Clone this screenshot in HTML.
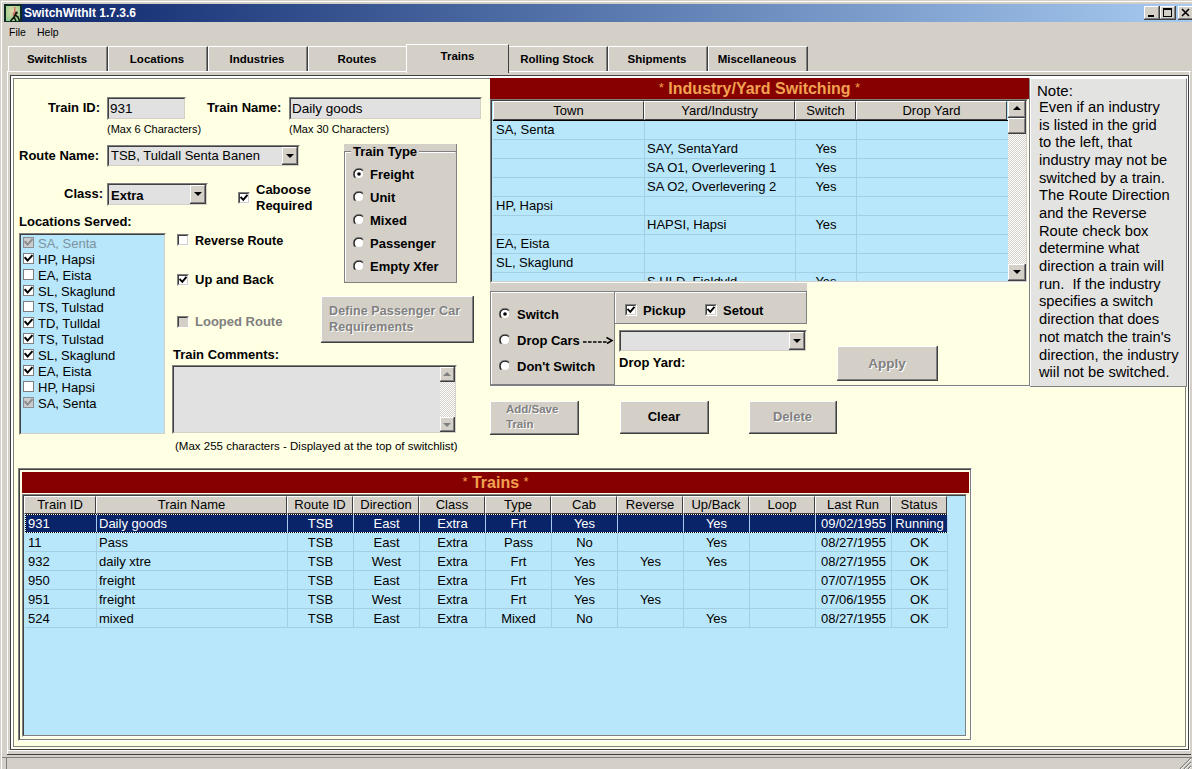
<!DOCTYPE html><html><head><meta charset="utf-8"><style>
html,body{margin:0;padding:0;}
body{width:1192px;height:769px;overflow:hidden;position:relative;background:#D4D0C8;font-family:'Liberation Sans', sans-serif;}
div{box-sizing:content-box;}
</style></head><body>
<div style="position:absolute;left:1px;top:1px;width:1191px;height:1px;background:#fff"></div>
<div style="position:absolute;left:1px;top:1px;width:1px;height:768px;background:#fff"></div>
<div style="position:absolute;left:4px;top:4px;width:1188px;height:18px;background:linear-gradient(to right,#0A246A,#A6CAF0)"></div>
<svg style="position:absolute;left:4px;top:4px" width="18" height="18"><rect x="0" y="0" width="18" height="18" fill="#0E2A22"/><defs><radialGradient id="ig" cx="0.5" cy="0.35" r="0.7"><stop offset="0" stop-color="#E8D8A8"/><stop offset="1" stop-color="#8FD08F"/></radialGradient></defs><rect x="2" y="2" width="14" height="15" fill="url(#ig)"/><path d="M10 3 L11.5 3 L11.5 8 L13 9 L12 12 L9 12 L8.5 9 L10 8 Z" fill="#D07868"/><circle cx="12.5" cy="8.8" r="1.3" fill="#1A1A10"/><path d="M12 9.5 L10 13 L6.5 17 M10 13 L12 17 M11 11 L14 13 L15.5 17" stroke="#101808" stroke-width="1.6" fill="none"/></svg>
<div style="position:absolute;left:24px;top:5px;white-space:pre;font:bold 12px/16px 'Liberation Sans', sans-serif;color:#fff">SwitchWithIt 1.7.3.6</div>
<div style="position:absolute;left:1144px;top:6px;width:15px;height:13px;border-right:1px solid #404040;border-bottom:1px solid #404040;"><div style="position:absolute;left:0;top:0;width:13px;height:11px;border:1px solid;border-color:#FFFFFF #808080 #808080 #FFFFFF;background:#D4D0C8"></div></div>
<div style="position:absolute;left:1160px;top:6px;width:15px;height:13px;border-right:1px solid #404040;border-bottom:1px solid #404040;"><div style="position:absolute;left:0;top:0;width:13px;height:11px;border:1px solid;border-color:#FFFFFF #808080 #808080 #FFFFFF;background:#D4D0C8"></div></div>
<div style="position:absolute;left:1178px;top:6px;width:15px;height:13px;border-right:1px solid #404040;border-bottom:1px solid #404040;"><div style="position:absolute;left:0;top:0;width:13px;height:11px;border:1px solid;border-color:#FFFFFF #808080 #808080 #FFFFFF;background:#D4D0C8"></div></div>
<div style="position:absolute;left:1148px;top:15px;width:6px;height:2px;background:#000"></div>
<div style="position:absolute;left:1163px;top:8px;width:9px;height:9px;border:1px solid #000;border-top-width:2px;box-sizing:border-box"></div>
<div style="position:absolute;left:1181px;top:5px;white-space:pre;line-height:10px;top:8px"><svg width="10" height="10"><path d="M1 1 L8 8 M8 1 L1 8" stroke="#000" stroke-width="1.6"/></svg></div>
<div style="position:absolute;left:9px;top:26px;white-space:pre;font:10.5px/12px 'Liberation Sans', sans-serif;color:#000">File</div>
<div style="position:absolute;left:37px;top:26px;white-space:pre;font:10.5px/12px 'Liberation Sans', sans-serif;color:#000">Help</div>
<div style="position:absolute;left:8px;top:46px;width:98px;height:25px;border-left:1px solid #fff;border-top:1px solid #fff;border-right:1px solid #404040;background:#D4D0C8;box-sizing:border-box;width:100px;"></div>
<div style="position:absolute;left:106px;top:47px;width:1px;height:24px;background:#808080"></div>
<div style="position:absolute;left:7px;top:53px;width:100px;text-align:center;white-space:pre;font:bold 11.5px/13px 'Liberation Sans', sans-serif;color:#000">Switchlists</div>
<div style="position:absolute;left:108px;top:46px;width:98px;height:25px;border-left:1px solid #fff;border-top:1px solid #fff;border-right:1px solid #404040;background:#D4D0C8;box-sizing:border-box;width:100px;"></div>
<div style="position:absolute;left:206px;top:47px;width:1px;height:24px;background:#808080"></div>
<div style="position:absolute;left:107px;top:53px;width:100px;text-align:center;white-space:pre;font:bold 11.5px/13px 'Liberation Sans', sans-serif;color:#000">Locations</div>
<div style="position:absolute;left:208px;top:46px;width:98px;height:25px;border-left:1px solid #fff;border-top:1px solid #fff;border-right:1px solid #404040;background:#D4D0C8;box-sizing:border-box;width:100px;"></div>
<div style="position:absolute;left:306px;top:47px;width:1px;height:24px;background:#808080"></div>
<div style="position:absolute;left:207px;top:53px;width:100px;text-align:center;white-space:pre;font:bold 11.5px/13px 'Liberation Sans', sans-serif;color:#000">Industries</div>
<div style="position:absolute;left:308px;top:46px;width:98px;height:25px;border-left:1px solid #fff;border-top:1px solid #fff;border-right:1px solid #404040;background:#D4D0C8;box-sizing:border-box;width:100px;"></div>
<div style="position:absolute;left:406px;top:47px;width:1px;height:24px;background:#808080"></div>
<div style="position:absolute;left:307px;top:53px;width:100px;text-align:center;white-space:pre;font:bold 11.5px/13px 'Liberation Sans', sans-serif;color:#000">Routes</div>
<div style="position:absolute;left:508px;top:46px;width:98px;height:25px;border-left:1px solid #fff;border-top:1px solid #fff;border-right:1px solid #404040;background:#D4D0C8;box-sizing:border-box;width:100px;"></div>
<div style="position:absolute;left:606px;top:47px;width:1px;height:24px;background:#808080"></div>
<div style="position:absolute;left:507px;top:53px;width:100px;text-align:center;white-space:pre;font:bold 11.5px/13px 'Liberation Sans', sans-serif;color:#000">Rolling Stock</div>
<div style="position:absolute;left:608px;top:46px;width:98px;height:25px;border-left:1px solid #fff;border-top:1px solid #fff;border-right:1px solid #404040;background:#D4D0C8;box-sizing:border-box;width:100px;"></div>
<div style="position:absolute;left:706px;top:47px;width:1px;height:24px;background:#808080"></div>
<div style="position:absolute;left:607px;top:53px;width:100px;text-align:center;white-space:pre;font:bold 11.5px/13px 'Liberation Sans', sans-serif;color:#000">Shipments</div>
<div style="position:absolute;left:708px;top:46px;width:98px;height:25px;border-left:1px solid #fff;border-top:1px solid #fff;border-right:1px solid #404040;background:#D4D0C8;box-sizing:border-box;width:100px;"></div>
<div style="position:absolute;left:806px;top:47px;width:1px;height:24px;background:#808080"></div>
<div style="position:absolute;left:707px;top:53px;width:100px;text-align:center;white-space:pre;font:bold 11.5px/13px 'Liberation Sans', sans-serif;color:#000">Miscellaneous</div>
<div style="position:absolute;left:406px;top:44px;width:103px;height:29px;border-left:1px solid #fff;border-top:1px solid #fff;border-right:1px solid #404040;background:#D4D0C8;box-sizing:border-box;z-index:2"></div>
<div style="position:absolute;left:406px;top:50px;width:103px;text-align:center;white-space:pre;font:bold 11.5px/13px 'Liberation Sans', sans-serif;color:#000;z-index:3">Trains</div>
<div style="position:absolute;left:7px;top:71px;width:1184px;height:1px;background:#fff"></div>
<div style="position:absolute;left:7px;top:71px;width:1px;height:683px;background:#fff"></div>
<div style="position:absolute;left:7px;top:754px;width:1184px;height:1px;background:#404040"></div>
<div style="position:absolute;left:10px;top:75px;width:1179px;height:675px;background:#FFFFE3;border:1px solid #404040;box-sizing:border-box"></div>
<div style="position:absolute;left:11px;top:76px;width:1177px;height:673px;border:1px solid #fff;box-sizing:border-box"></div>
<div style="position:absolute;left:12px;top:77px;width:1175px;height:671px;border-left:1px solid #fff;border-top:1px solid #fff;box-sizing:border-box"></div>
<div style="position:absolute;left:13px;top:78px;width:1173px;height:669px;border:1px solid #808080;box-sizing:border-box"></div>
<div style="position:absolute;left:1189px;top:72px;width:1px;height:679px;background:#fff"></div>
<div style="position:absolute;left:8px;top:750px;width:1182px;height:1px;background:#fff"></div>
<div style="position:absolute;left:2px;top:757px;width:1190px;height:1px;background:#808080"></div>
<div style="position:absolute;left:2px;top:758px;width:1190px;height:11px;background:#D4D0C8"></div>
<div style="position:absolute;left:6px;top:757px;width:1px;height:12px;background:#808080"></div>
<svg style="position:absolute;left:1178px;top:756px" width="14" height="13"><path d="M13 2 L2 13 M13 6 L6 13 M13 10 L10 13" stroke="#808080" stroke-width="1.2"/><path d="M13 3 L3 13 M13 7 L7 13 M13 11 L11 13" stroke="#fff" stroke-width="0.8"/></svg>
<div style="position:absolute;left:48px;top:100px;white-space:pre;font:bold 13px/16px 'Liberation Sans', sans-serif;color:#000">Train ID:</div>
<div style="position:absolute;left:107px;top:97px;width:77px;height:21px;border:1px solid;border-color:#808080 transparent transparent #808080;"><div style="position:absolute;left:0;top:0;width:75px;height:19px;border:1px solid;border-color:#404040 #D4D0C8 #D4D0C8 #404040;background:#E1E1E1"></div></div>
<div style="position:absolute;left:110px;top:101px;white-space:pre;font:13.5px/16px 'Liberation Sans', sans-serif;color:#000">931</div>
<div style="position:absolute;left:107px;top:123px;white-space:pre;font:11px/13px 'Liberation Sans', sans-serif;color:#000">(Max 6 Characters)</div>
<div style="position:absolute;left:207px;top:100px;white-space:pre;font:bold 13px/16px 'Liberation Sans', sans-serif;color:#000">Train Name:</div>
<div style="position:absolute;left:289px;top:97px;width:191px;height:21px;border:1px solid;border-color:#808080 transparent transparent #808080;"><div style="position:absolute;left:0;top:0;width:189px;height:19px;border:1px solid;border-color:#404040 #D4D0C8 #D4D0C8 #404040;background:#E1E1E1"></div></div>
<div style="position:absolute;left:292px;top:101px;white-space:pre;font:13.5px/16px 'Liberation Sans', sans-serif;color:#000">Daily goods</div>
<div style="position:absolute;left:289px;top:123px;white-space:pre;font:11px/13px 'Liberation Sans', sans-serif;color:#000">(Max 30 Characters)</div>
<div style="position:absolute;left:19px;top:148px;white-space:pre;font:bold 13px/16px 'Liberation Sans', sans-serif;color:#000">Route Name:</div>
<div style="position:absolute;left:107px;top:145px;width:191px;height:20px;border:1px solid;border-color:#808080 transparent transparent #808080;"><div style="position:absolute;left:0;top:0;width:189px;height:18px;border:1px solid;border-color:#404040 #D4D0C8 #D4D0C8 #404040;background:#E1E1E1"></div></div>
<div style="position:absolute;left:282px;top:147px;width:15px;height:17px;border-right:1px solid #404040;border-bottom:1px solid #404040;"><div style="position:absolute;left:0;top:0;width:13px;height:15px;border:1px solid;border-color:#FFFFFF #808080 #808080 #FFFFFF;background:#D4D0C8"></div></div>
<div style="position:absolute;left:286px;top:154px;width:0;height:0;border-left:4px solid transparent;border-right:4px solid transparent;border-top:4px solid #000"></div>
<div style="position:absolute;left:111px;top:148px;white-space:pre;font:13px/16px 'Liberation Sans', sans-serif;color:#000">TSB, Tuldall Senta Banen</div>
<div style="position:absolute;left:64px;top:186px;white-space:pre;font:bold 13px/16px 'Liberation Sans', sans-serif;color:#000">Class:</div>
<div style="position:absolute;left:107px;top:183px;width:99px;height:21px;border:1px solid;border-color:#808080 transparent transparent #808080;"><div style="position:absolute;left:0;top:0;width:97px;height:19px;border:1px solid;border-color:#404040 #D4D0C8 #D4D0C8 #404040;background:#E1E1E1"></div></div>
<div style="position:absolute;left:190px;top:185px;width:15px;height:18px;border-right:1px solid #404040;border-bottom:1px solid #404040;"><div style="position:absolute;left:0;top:0;width:13px;height:16px;border:1px solid;border-color:#FFFFFF #808080 #808080 #FFFFFF;background:#D4D0C8"></div></div>
<div style="position:absolute;left:194px;top:192px;width:0;height:0;border-left:4px solid transparent;border-right:4px solid transparent;border-top:4px solid #000"></div>
<div style="position:absolute;left:111px;top:187.5px;white-space:pre;font:bold 13px/16px 'Liberation Sans', sans-serif;color:#000">Extra</div>
<div style="position:absolute;left:238px;top:192px;width:10px;height:10px;border:1px solid;border-color:#808080 #FFFFFF #FFFFFF #808080;"><div style="position:absolute;left:0;top:0;width:8px;height:8px;border:1px solid;border-color:#404040 #D4D0C8 #D4D0C8 #404040;background:#FFFFFF"><svg width="8" height="8" style="position:absolute;left:0;top:0"><path d="M1.2 3.6 L3.3 5.9 L6.8 1.6" stroke="#000" stroke-width="1.9" fill="none" stroke-linecap="square"/></svg></div></div>
<div style="position:absolute;left:256px;top:182px;white-space:pre;font:bold 13px/16px 'Liberation Sans', sans-serif;color:#000">Caboose
Required</div>
<div style="position:absolute;left:19px;top:214px;white-space:pre;font:bold 13px/16px 'Liberation Sans', sans-serif;color:#000">Locations Served:</div>
<div style="position:absolute;left:19px;top:233px;width:145px;height:200px;border:1px solid;border-color:#808080 transparent transparent #808080;"><div style="position:absolute;left:0;top:0;width:143px;height:198px;border:1px solid;border-color:#404040 #D4D0C8 #D4D0C8 #404040;background:#B8E6FA"></div></div>
<div style="position:absolute;left:23px;top:237px;width:9px;height:9px;border:1px solid #8A9094;background:#C9CCCC"><svg width="9" height="9" style="position:absolute;left:0;top:0"><path d="M1.3 4 L3.6 6.6 L7.8 1.8" stroke="#8C8C8C" stroke-width="2" fill="none" stroke-linecap="square"/></svg></div>
<div style="position:absolute;left:38px;top:235.5px;white-space:pre;font:13px/16px 'Liberation Sans', sans-serif;color:#7C93A0">SA, Senta</div>
<div style="position:absolute;left:23px;top:253px;width:9px;height:9px;border:1px solid #7F7F7F;background:#FFFFFF"><svg width="9" height="9" style="position:absolute;left:0;top:0"><path d="M1.3 4 L3.6 6.6 L7.8 1.8" stroke="#000" stroke-width="2" fill="none" stroke-linecap="square"/></svg></div>
<div style="position:absolute;left:38px;top:251.5px;white-space:pre;font:13px/16px 'Liberation Sans', sans-serif;color:#000">HP, Hapsi</div>
<div style="position:absolute;left:23px;top:269px;width:9px;height:9px;border:1px solid #7F7F7F;background:#FFFFFF"></div>
<div style="position:absolute;left:38px;top:267.5px;white-space:pre;font:13px/16px 'Liberation Sans', sans-serif;color:#000">EA, Eista</div>
<div style="position:absolute;left:23px;top:285px;width:9px;height:9px;border:1px solid #7F7F7F;background:#FFFFFF"><svg width="9" height="9" style="position:absolute;left:0;top:0"><path d="M1.3 4 L3.6 6.6 L7.8 1.8" stroke="#000" stroke-width="2" fill="none" stroke-linecap="square"/></svg></div>
<div style="position:absolute;left:38px;top:283.5px;white-space:pre;font:13px/16px 'Liberation Sans', sans-serif;color:#000">SL, Skaglund</div>
<div style="position:absolute;left:23px;top:301px;width:9px;height:9px;border:1px solid #7F7F7F;background:#FFFFFF"></div>
<div style="position:absolute;left:38px;top:299.5px;white-space:pre;font:13px/16px 'Liberation Sans', sans-serif;color:#000">TS, Tulstad</div>
<div style="position:absolute;left:23px;top:317px;width:9px;height:9px;border:1px solid #7F7F7F;background:#FFFFFF"><svg width="9" height="9" style="position:absolute;left:0;top:0"><path d="M1.3 4 L3.6 6.6 L7.8 1.8" stroke="#000" stroke-width="2" fill="none" stroke-linecap="square"/></svg></div>
<div style="position:absolute;left:38px;top:315.5px;white-space:pre;font:13px/16px 'Liberation Sans', sans-serif;color:#000">TD, Tulldal</div>
<div style="position:absolute;left:23px;top:333px;width:9px;height:9px;border:1px solid #7F7F7F;background:#FFFFFF"><svg width="9" height="9" style="position:absolute;left:0;top:0"><path d="M1.3 4 L3.6 6.6 L7.8 1.8" stroke="#000" stroke-width="2" fill="none" stroke-linecap="square"/></svg></div>
<div style="position:absolute;left:38px;top:331.5px;white-space:pre;font:13px/16px 'Liberation Sans', sans-serif;color:#000">TS, Tulstad</div>
<div style="position:absolute;left:23px;top:349px;width:9px;height:9px;border:1px solid #7F7F7F;background:#FFFFFF"><svg width="9" height="9" style="position:absolute;left:0;top:0"><path d="M1.3 4 L3.6 6.6 L7.8 1.8" stroke="#000" stroke-width="2" fill="none" stroke-linecap="square"/></svg></div>
<div style="position:absolute;left:38px;top:347.5px;white-space:pre;font:13px/16px 'Liberation Sans', sans-serif;color:#000">SL, Skaglund</div>
<div style="position:absolute;left:23px;top:365px;width:9px;height:9px;border:1px solid #7F7F7F;background:#FFFFFF"><svg width="9" height="9" style="position:absolute;left:0;top:0"><path d="M1.3 4 L3.6 6.6 L7.8 1.8" stroke="#000" stroke-width="2" fill="none" stroke-linecap="square"/></svg></div>
<div style="position:absolute;left:38px;top:363.5px;white-space:pre;font:13px/16px 'Liberation Sans', sans-serif;color:#000">EA, Eista</div>
<div style="position:absolute;left:23px;top:381px;width:9px;height:9px;border:1px solid #7F7F7F;background:#FFFFFF"></div>
<div style="position:absolute;left:38px;top:379.5px;white-space:pre;font:13px/16px 'Liberation Sans', sans-serif;color:#000">HP, Hapsi</div>
<div style="position:absolute;left:23px;top:397px;width:9px;height:9px;border:1px solid #8A9094;background:#C9CCCC"><svg width="9" height="9" style="position:absolute;left:0;top:0"><path d="M1.3 4 L3.6 6.6 L7.8 1.8" stroke="#8C8C8C" stroke-width="2" fill="none" stroke-linecap="square"/></svg></div>
<div style="position:absolute;left:38px;top:395.5px;white-space:pre;font:13px/16px 'Liberation Sans', sans-serif;color:#000">SA, Senta</div>
<div style="position:absolute;left:177px;top:234px;width:10px;height:10px;border:1px solid;border-color:#808080 #FFFFFF #FFFFFF #808080;"><div style="position:absolute;left:0;top:0;width:8px;height:8px;border:1px solid;border-color:#404040 #D4D0C8 #D4D0C8 #404040;background:#FFFFFF"></div></div>
<div style="position:absolute;left:195px;top:233px;white-space:pre;font:bold 12.6px/16px 'Liberation Sans', sans-serif;color:#000">Reverse Route</div>
<div style="position:absolute;left:177px;top:274px;width:10px;height:10px;border:1px solid;border-color:#808080 #FFFFFF #FFFFFF #808080;"><div style="position:absolute;left:0;top:0;width:8px;height:8px;border:1px solid;border-color:#404040 #D4D0C8 #D4D0C8 #404040;background:#FFFFFF"><svg width="8" height="8" style="position:absolute;left:0;top:0"><path d="M1.2 3.6 L3.3 5.9 L6.8 1.6" stroke="#000" stroke-width="1.9" fill="none" stroke-linecap="square"/></svg></div></div>
<div style="position:absolute;left:195px;top:272px;white-space:pre;font:bold 13px/16px 'Liberation Sans', sans-serif;color:#000">Up and Back</div>
<div style="position:absolute;left:177px;top:316px;width:10px;height:10px;border:1px solid;border-color:#808080 #FFFFFF #FFFFFF #808080;"><div style="position:absolute;left:0;top:0;width:8px;height:8px;border:1px solid;border-color:#404040 #D4D0C8 #D4D0C8 #404040;background:#D4D0C8"></div></div>
<div style="position:absolute;left:195px;top:314px;white-space:pre;font:bold 13px/16px 'Liberation Sans', sans-serif;color:#808080">Looped Route</div>
<div style="position:absolute;left:344px;top:144px;width:113px;height:139px;background:#D4D0C8;border-right:1px solid #808080;border-bottom:1px solid #808080;box-sizing:border-box"></div>
<div style="position:absolute;left:344px;top:151px;width:112px;height:131px;border-left:1px solid #808080;border-top:1px solid #808080;box-sizing:border-box"></div>
<div style="position:absolute;left:345px;top:152px;width:110px;height:129px;border-left:1px solid #fff;border-top:1px solid #fff;box-sizing:border-box"></div>
<div style="position:absolute;left:351px;top:144px;padding:0 2px;background:#D4D0C8;font:bold 13px/16px 'Liberation Sans', sans-serif;color:#000">Train Type</div>
<svg style="position:absolute;left:353px;top:168px" width="12" height="12"><path d="M10.4 2 A5.8 5.8 0 0 0 1.6 10" stroke="#909090" fill="none"/><path d="M9.6 2.6 A4.8 4.8 0 0 0 2.4 9.6" stroke="#1E1E1E" stroke-width="1.3" fill="none"/><circle cx="6" cy="6" r="4" fill="#fff"/><circle cx="6" cy="6" r="1.8" fill="#000"/></svg>
<div style="position:absolute;left:370px;top:167px;white-space:pre;font:bold 13px/16px 'Liberation Sans', sans-serif;color:#000">Freight</div>
<svg style="position:absolute;left:353px;top:191px" width="12" height="12"><path d="M10.4 2 A5.8 5.8 0 0 0 1.6 10" stroke="#909090" fill="none"/><path d="M9.6 2.6 A4.8 4.8 0 0 0 2.4 9.6" stroke="#1E1E1E" stroke-width="1.3" fill="none"/><circle cx="6" cy="6" r="4" fill="#fff"/></svg>
<div style="position:absolute;left:370px;top:190px;white-space:pre;font:bold 13px/16px 'Liberation Sans', sans-serif;color:#000">Unit</div>
<svg style="position:absolute;left:353px;top:214px" width="12" height="12"><path d="M10.4 2 A5.8 5.8 0 0 0 1.6 10" stroke="#909090" fill="none"/><path d="M9.6 2.6 A4.8 4.8 0 0 0 2.4 9.6" stroke="#1E1E1E" stroke-width="1.3" fill="none"/><circle cx="6" cy="6" r="4" fill="#fff"/></svg>
<div style="position:absolute;left:370px;top:213px;white-space:pre;font:bold 13px/16px 'Liberation Sans', sans-serif;color:#000">Mixed</div>
<svg style="position:absolute;left:353px;top:237px" width="12" height="12"><path d="M10.4 2 A5.8 5.8 0 0 0 1.6 10" stroke="#909090" fill="none"/><path d="M9.6 2.6 A4.8 4.8 0 0 0 2.4 9.6" stroke="#1E1E1E" stroke-width="1.3" fill="none"/><circle cx="6" cy="6" r="4" fill="#fff"/></svg>
<div style="position:absolute;left:370px;top:236px;white-space:pre;font:bold 13px/16px 'Liberation Sans', sans-serif;color:#000">Passenger</div>
<svg style="position:absolute;left:353px;top:260px" width="12" height="12"><path d="M10.4 2 A5.8 5.8 0 0 0 1.6 10" stroke="#909090" fill="none"/><path d="M9.6 2.6 A4.8 4.8 0 0 0 2.4 9.6" stroke="#1E1E1E" stroke-width="1.3" fill="none"/><circle cx="6" cy="6" r="4" fill="#fff"/></svg>
<div style="position:absolute;left:370px;top:259px;white-space:pre;font:bold 13px/16px 'Liberation Sans', sans-serif;color:#000">Empty Xfer</div>
<div style="position:absolute;left:321px;top:296px;width:152px;height:46px;border-right:1px solid #404040;border-bottom:1px solid #404040;"><div style="position:absolute;left:0;top:0;width:150px;height:44px;border:1px solid;border-color:#FFFFFF #808080 #808080 #FFFFFF;background:#D4D0C8"></div></div>
<div style="position:absolute;left:329px;top:303px;white-space:pre;font:bold 12.5px/16px 'Liberation Sans', sans-serif;color:#808080;text-shadow:1px 1px 0 #fff;letter-spacing:0.1px">Define Passenger Car
Requirements</div>
<div style="position:absolute;left:173px;top:347px;white-space:pre;font:bold 13px/16px 'Liberation Sans', sans-serif;color:#000">Train Comments:</div>
<div style="position:absolute;left:172px;top:365px;width:283px;height:67px;border:1px solid;border-color:#808080 transparent transparent #808080;"><div style="position:absolute;left:0;top:0;width:281px;height:65px;border:1px solid;border-color:#404040 #D4D0C8 #D4D0C8 #404040;background:#E1E1E1"></div></div>
<div style="position:absolute;left:440px;top:367px;width:15px;height:65px;background:repeating-conic-gradient(#fff 0 25%,#D4D0C8 0 50%) 0 0/2px 2px"></div>
<div style="position:absolute;left:440px;top:367px;width:14px;height:14px;border-right:1px solid #404040;border-bottom:1px solid #404040;"><div style="position:absolute;left:0;top:0;width:12px;height:12px;border:1px solid;border-color:#FFFFFF #808080 #808080 #FFFFFF;background:#D4D0C8"></div></div>
<div style="position:absolute;left:443px;top:372px;width:0;height:0;border-left:4px solid transparent;border-right:4px solid transparent;border-bottom:4px solid #808080"></div>
<div style="position:absolute;left:440px;top:417px;width:14px;height:14px;border-right:1px solid #404040;border-bottom:1px solid #404040;"><div style="position:absolute;left:0;top:0;width:12px;height:12px;border:1px solid;border-color:#FFFFFF #808080 #808080 #FFFFFF;background:#D4D0C8"></div></div>
<div style="position:absolute;left:443px;top:423px;width:0;height:0;border-left:4px solid transparent;border-right:4px solid transparent;border-top:4px solid #808080"></div>
<div style="position:absolute;left:175px;top:439.5px;white-space:pre;font:11.5px/13px 'Liberation Sans', sans-serif;color:#000">(Max 255 characters - Displayed at the top of switchlist)</div>
<div style="position:absolute;left:490px;top:78px;width:539px;height:21px;background:#860000"></div>
<div style="position:absolute;left:490px;top:78px;width:539px;text-align:center;white-space:pre;font:bold 16px/19px 'Liberation Sans', sans-serif;color:#F2A250"><span style="font-weight:normal;font-size:13px;vertical-align:2px">*</span> Industry/Yard Switching <span style="font-weight:normal;font-size:13px;vertical-align:2px">*</span></div>
<div style="position:absolute;left:490px;top:99px;width:538px;height:184px;border:1px solid;border-color:#808080 #FFFFFF #FFFFFF #808080;box-sizing:border-box"></div>
<div style="position:absolute;left:491px;top:100px;width:536px;height:182px;border:1px solid;border-color:#404040 #D4D0C8 #D4D0C8 #404040;box-sizing:border-box;background:#B8E6FA"></div>
<div style="position:absolute;left:493px;top:101px;width:151px;height:19px;box-sizing:border-box;background:#D4D0C8;border:1px solid;border-color:#FFFFFF #404040 #404040 #FFFFFF;"></div>
<div style="position:absolute;left:494px;top:103px;width:149px;text-align:center;white-space:pre;font:13px/16px 'Liberation Sans', sans-serif;color:#000">Town</div>
<div style="position:absolute;left:644px;top:101px;width:151px;height:19px;box-sizing:border-box;background:#D4D0C8;border:1px solid;border-color:#FFFFFF #404040 #404040 #FFFFFF;"></div>
<div style="position:absolute;left:645px;top:103px;width:149px;text-align:center;white-space:pre;font:13px/16px 'Liberation Sans', sans-serif;color:#000">Yard/Industry</div>
<div style="position:absolute;left:795px;top:101px;width:61px;height:19px;box-sizing:border-box;background:#D4D0C8;border:1px solid;border-color:#FFFFFF #404040 #404040 #FFFFFF;"></div>
<div style="position:absolute;left:796px;top:103px;width:59px;text-align:center;white-space:pre;font:13px/16px 'Liberation Sans', sans-serif;color:#000">Switch</div>
<div style="position:absolute;left:856px;top:101px;width:151px;height:19px;box-sizing:border-box;background:#D4D0C8;border:1px solid;border-color:#FFFFFF #404040 #404040 #FFFFFF;"></div>
<div style="position:absolute;left:857px;top:103px;width:149px;text-align:center;white-space:pre;font:13px/16px 'Liberation Sans', sans-serif;color:#000">Drop Yard</div>
<div style="position:absolute;left:493px;top:120px;width:515px;height:161px;overflow:hidden">
<div style="position:absolute;left:0;top:19px;width:515px;height:1px;background:#A4CEE2"></div>
<div style="position:absolute;left:151px;top:1px;width:1px;height:19px;background:#A4CEE2"></div>
<div style="position:absolute;left:302px;top:1px;width:1px;height:19px;background:#A4CEE2"></div>
<div style="position:absolute;left:363px;top:1px;width:1px;height:19px;background:#A4CEE2"></div>
<div style="position:absolute;left:3px;top:2px;white-space:pre;font:13px/16px 'Liberation Sans', sans-serif;color:#000">SA, Senta</div>
<div style="position:absolute;left:0;top:38px;width:515px;height:1px;background:#A4CEE2"></div>
<div style="position:absolute;left:151px;top:20px;width:1px;height:19px;background:#A4CEE2"></div>
<div style="position:absolute;left:302px;top:20px;width:1px;height:19px;background:#A4CEE2"></div>
<div style="position:absolute;left:363px;top:20px;width:1px;height:19px;background:#A4CEE2"></div>
<div style="position:absolute;left:154px;top:21px;white-space:pre;font:13px/16px 'Liberation Sans', sans-serif;color:#000">SAY, SentaYard</div>
<div style="position:absolute;left:303px;top:21px;width:60px;text-align:center;font:13px/16px 'Liberation Sans', sans-serif;color:#000">Yes</div>
<div style="position:absolute;left:0;top:57px;width:515px;height:1px;background:#A4CEE2"></div>
<div style="position:absolute;left:151px;top:39px;width:1px;height:19px;background:#A4CEE2"></div>
<div style="position:absolute;left:302px;top:39px;width:1px;height:19px;background:#A4CEE2"></div>
<div style="position:absolute;left:363px;top:39px;width:1px;height:19px;background:#A4CEE2"></div>
<div style="position:absolute;left:154px;top:40px;white-space:pre;font:13px/16px 'Liberation Sans', sans-serif;color:#000">SA O1, Overlevering 1</div>
<div style="position:absolute;left:303px;top:40px;width:60px;text-align:center;font:13px/16px 'Liberation Sans', sans-serif;color:#000">Yes</div>
<div style="position:absolute;left:0;top:76px;width:515px;height:1px;background:#A4CEE2"></div>
<div style="position:absolute;left:151px;top:58px;width:1px;height:19px;background:#A4CEE2"></div>
<div style="position:absolute;left:302px;top:58px;width:1px;height:19px;background:#A4CEE2"></div>
<div style="position:absolute;left:363px;top:58px;width:1px;height:19px;background:#A4CEE2"></div>
<div style="position:absolute;left:154px;top:59px;white-space:pre;font:13px/16px 'Liberation Sans', sans-serif;color:#000">SA O2, Overlevering 2</div>
<div style="position:absolute;left:303px;top:59px;width:60px;text-align:center;font:13px/16px 'Liberation Sans', sans-serif;color:#000">Yes</div>
<div style="position:absolute;left:0;top:95px;width:515px;height:1px;background:#A4CEE2"></div>
<div style="position:absolute;left:151px;top:77px;width:1px;height:19px;background:#A4CEE2"></div>
<div style="position:absolute;left:302px;top:77px;width:1px;height:19px;background:#A4CEE2"></div>
<div style="position:absolute;left:363px;top:77px;width:1px;height:19px;background:#A4CEE2"></div>
<div style="position:absolute;left:3px;top:78px;white-space:pre;font:13px/16px 'Liberation Sans', sans-serif;color:#000">HP, Hapsi</div>
<div style="position:absolute;left:0;top:114px;width:515px;height:1px;background:#A4CEE2"></div>
<div style="position:absolute;left:151px;top:96px;width:1px;height:19px;background:#A4CEE2"></div>
<div style="position:absolute;left:302px;top:96px;width:1px;height:19px;background:#A4CEE2"></div>
<div style="position:absolute;left:363px;top:96px;width:1px;height:19px;background:#A4CEE2"></div>
<div style="position:absolute;left:154px;top:97px;white-space:pre;font:13px/16px 'Liberation Sans', sans-serif;color:#000">HAPSI, Hapsi</div>
<div style="position:absolute;left:303px;top:97px;width:60px;text-align:center;font:13px/16px 'Liberation Sans', sans-serif;color:#000">Yes</div>
<div style="position:absolute;left:0;top:133px;width:515px;height:1px;background:#A4CEE2"></div>
<div style="position:absolute;left:151px;top:115px;width:1px;height:19px;background:#A4CEE2"></div>
<div style="position:absolute;left:302px;top:115px;width:1px;height:19px;background:#A4CEE2"></div>
<div style="position:absolute;left:363px;top:115px;width:1px;height:19px;background:#A4CEE2"></div>
<div style="position:absolute;left:3px;top:116px;white-space:pre;font:13px/16px 'Liberation Sans', sans-serif;color:#000">EA, Eista</div>
<div style="position:absolute;left:0;top:152px;width:515px;height:1px;background:#A4CEE2"></div>
<div style="position:absolute;left:151px;top:134px;width:1px;height:19px;background:#A4CEE2"></div>
<div style="position:absolute;left:302px;top:134px;width:1px;height:19px;background:#A4CEE2"></div>
<div style="position:absolute;left:363px;top:134px;width:1px;height:19px;background:#A4CEE2"></div>
<div style="position:absolute;left:3px;top:135px;white-space:pre;font:13px/16px 'Liberation Sans', sans-serif;color:#000">SL, Skaglund</div>
<div style="position:absolute;left:0;top:171px;width:515px;height:1px;background:#A4CEE2"></div>
<div style="position:absolute;left:151px;top:153px;width:1px;height:19px;background:#A4CEE2"></div>
<div style="position:absolute;left:302px;top:153px;width:1px;height:19px;background:#A4CEE2"></div>
<div style="position:absolute;left:363px;top:153px;width:1px;height:19px;background:#A4CEE2"></div>
<div style="position:absolute;left:154px;top:154px;white-space:pre;font:13px/16px 'Liberation Sans', sans-serif;color:#000">S HLD, Fjeldvld</div>
<div style="position:absolute;left:303px;top:154px;width:60px;text-align:center;font:13px/16px 'Liberation Sans', sans-serif;color:#000">Yes</div>
</div>
<div style="position:absolute;left:493px;top:120px;width:515px;height:1px;background:#000"></div>
<div style="position:absolute;left:1008px;top:101px;width:18px;height:180px;background:repeating-conic-gradient(#fff 0 25%,#D4D0C8 0 50%) 0 0/2px 2px"></div>
<div style="position:absolute;left:1008px;top:101px;width:17px;height:16px;border-right:1px solid #404040;border-bottom:1px solid #404040;"><div style="position:absolute;left:0;top:0;width:15px;height:14px;border:1px solid;border-color:#FFFFFF #808080 #808080 #FFFFFF;background:#D4D0C8"></div></div>
<div style="position:absolute;left:1013px;top:106px;width:0;height:0;border-left:4px solid transparent;border-right:4px solid transparent;border-bottom:4px solid #000"></div>
<div style="position:absolute;left:1008px;top:118px;width:17px;height:15px;border-right:1px solid #404040;border-bottom:1px solid #404040;"><div style="position:absolute;left:0;top:0;width:15px;height:13px;border:1px solid;border-color:#FFFFFF #808080 #808080 #FFFFFF;background:#D4D0C8"></div></div>
<div style="position:absolute;left:1008px;top:264px;width:17px;height:16px;border-right:1px solid #404040;border-bottom:1px solid #404040;"><div style="position:absolute;left:0;top:0;width:15px;height:14px;border:1px solid;border-color:#FFFFFF #808080 #808080 #FFFFFF;background:#D4D0C8"></div></div>
<div style="position:absolute;left:1013px;top:270px;width:0;height:0;border-left:4px solid transparent;border-right:4px solid transparent;border-top:4px solid #000"></div>
<div style="position:absolute;left:1029px;top:78px;width:158px;height:309px;background:#E3E3E2;border:1px solid;border-color:#FFFFFF #808080 #808080 #808080;box-sizing:border-box"></div>
<div style="position:absolute;left:1030px;top:79px;width:1px;height:307px;background:#fff"></div>
<div style="position:absolute;left:1037px;top:82px;white-space:pre;font:15px/18px 'Liberation Sans', sans-serif;color:#000">Note:</div>
<div style="position:absolute;left:1039px;top:98px;white-space:pre;font:14.7px/18px 'Liberation Sans', sans-serif;color:#000">Even if an industry</div>
<div style="position:absolute;left:1039px;top:116px;white-space:pre;font:14.7px/18px 'Liberation Sans', sans-serif;color:#000">is listed in the grid</div>
<div style="position:absolute;left:1039px;top:133px;white-space:pre;font:14.7px/18px 'Liberation Sans', sans-serif;color:#000">to the left, that</div>
<div style="position:absolute;left:1039px;top:151px;white-space:pre;font:14.7px/18px 'Liberation Sans', sans-serif;color:#000">industry may not be</div>
<div style="position:absolute;left:1039px;top:169px;white-space:pre;font:14.7px/18px 'Liberation Sans', sans-serif;color:#000">switched by a train.</div>
<div style="position:absolute;left:1039px;top:186px;white-space:pre;font:14.7px/18px 'Liberation Sans', sans-serif;color:#000">The Route Direction</div>
<div style="position:absolute;left:1039px;top:204px;white-space:pre;font:14.7px/18px 'Liberation Sans', sans-serif;color:#000">and the Reverse</div>
<div style="position:absolute;left:1039px;top:222px;white-space:pre;font:14.7px/18px 'Liberation Sans', sans-serif;color:#000">Route check box</div>
<div style="position:absolute;left:1039px;top:239px;white-space:pre;font:14.7px/18px 'Liberation Sans', sans-serif;color:#000">determine what</div>
<div style="position:absolute;left:1039px;top:257px;white-space:pre;font:14.7px/18px 'Liberation Sans', sans-serif;color:#000">direction a train will</div>
<div style="position:absolute;left:1039px;top:275px;white-space:pre;font:14.7px/18px 'Liberation Sans', sans-serif;color:#000">run.  If the industry</div>
<div style="position:absolute;left:1039px;top:292px;white-space:pre;font:14.7px/18px 'Liberation Sans', sans-serif;color:#000">specifies a switch</div>
<div style="position:absolute;left:1039px;top:310px;white-space:pre;font:14.7px/18px 'Liberation Sans', sans-serif;color:#000">direction that does</div>
<div style="position:absolute;left:1039px;top:328px;white-space:pre;font:14.7px/18px 'Liberation Sans', sans-serif;color:#000">not match the train's</div>
<div style="position:absolute;left:1039px;top:346px;white-space:pre;font:14.7px/18px 'Liberation Sans', sans-serif;color:#000">direction, the industry</div>
<div style="position:absolute;left:1039px;top:363px;white-space:pre;font:14.7px/18px 'Liberation Sans', sans-serif;color:#000">wiil not be switched.</div>
<div style="position:absolute;left:490px;top:283px;width:317px;height:9px;background:#D4D0C8"></div>
<div style="position:absolute;left:490px;top:291px;width:125px;height:94px;background:#D4D0C8;border:1px solid;border-color:#808080 #808080 #808080 #808080;box-sizing:border-box"></div>
<div style="position:absolute;left:491px;top:292px;width:123px;height:92px;border-top:1px solid #fff;border-left:1px solid #fff;box-sizing:border-box"></div>
<svg style="position:absolute;left:499px;top:308px" width="12" height="12"><path d="M10.4 2 A5.8 5.8 0 0 0 1.6 10" stroke="#909090" fill="none"/><path d="M9.6 2.6 A4.8 4.8 0 0 0 2.4 9.6" stroke="#1E1E1E" stroke-width="1.3" fill="none"/><circle cx="6" cy="6" r="4" fill="#fff"/><circle cx="6" cy="6" r="1.8" fill="#000"/></svg>
<div style="position:absolute;left:517px;top:307px;white-space:pre;font:bold 13px/16px 'Liberation Sans', sans-serif;color:#000">Switch</div>
<svg style="position:absolute;left:499px;top:334px" width="12" height="12"><path d="M10.4 2 A5.8 5.8 0 0 0 1.6 10" stroke="#909090" fill="none"/><path d="M9.6 2.6 A4.8 4.8 0 0 0 2.4 9.6" stroke="#1E1E1E" stroke-width="1.3" fill="none"/><circle cx="6" cy="6" r="4" fill="#fff"/></svg>
<div style="position:absolute;left:517px;top:333px;white-space:pre;font:bold 13px/16px 'Liberation Sans', sans-serif;color:#000">Drop Cars</div>
<svg style="position:absolute;left:499px;top:360px" width="12" height="12"><path d="M10.4 2 A5.8 5.8 0 0 0 1.6 10" stroke="#909090" fill="none"/><path d="M9.6 2.6 A4.8 4.8 0 0 0 2.4 9.6" stroke="#1E1E1E" stroke-width="1.3" fill="none"/><circle cx="6" cy="6" r="4" fill="#fff"/></svg>
<div style="position:absolute;left:517px;top:359px;white-space:pre;font:bold 13px/16px 'Liberation Sans', sans-serif;color:#000">Don't Switch</div>
<svg style="position:absolute;left:580px;top:334px" width="34" height="12"><path d="M3 8 H28" stroke="#000" stroke-width="1.5" stroke-dasharray="3.6 1.4"/><path d="M26.5 3.5 L32 6.5 L27 9.5" stroke="#000" stroke-width="1.5" fill="none"/></svg>
<div style="position:absolute;left:614px;top:291px;width:193px;height:33px;background:#D4D0C8;border:1px solid;border-color:#808080 #808080 #808080 #808080;box-sizing:border-box"></div>
<div style="position:absolute;left:615px;top:292px;width:191px;height:1px;background:#fff"></div>
<div style="position:absolute;left:615px;top:292px;width:1px;height:31px;background:#fff"></div>
<div style="position:absolute;left:625px;top:304px;width:10px;height:10px;border:1px solid;border-color:#808080 #FFFFFF #FFFFFF #808080;"><div style="position:absolute;left:0;top:0;width:8px;height:8px;border:1px solid;border-color:#404040 #D4D0C8 #D4D0C8 #404040;background:#FFFFFF"><svg width="8" height="8" style="position:absolute;left:0;top:0"><path d="M1.2 3.6 L3.3 5.9 L6.8 1.6" stroke="#000" stroke-width="1.9" fill="none" stroke-linecap="square"/></svg></div></div>
<div style="position:absolute;left:643px;top:303px;white-space:pre;font:bold 13px/16px 'Liberation Sans', sans-serif;color:#000">Pickup</div>
<div style="position:absolute;left:705px;top:304px;width:10px;height:10px;border:1px solid;border-color:#808080 #FFFFFF #FFFFFF #808080;"><div style="position:absolute;left:0;top:0;width:8px;height:8px;border:1px solid;border-color:#404040 #D4D0C8 #D4D0C8 #404040;background:#FFFFFF"><svg width="8" height="8" style="position:absolute;left:0;top:0"><path d="M1.2 3.6 L3.3 5.9 L6.8 1.6" stroke="#000" stroke-width="1.9" fill="none" stroke-linecap="square"/></svg></div></div>
<div style="position:absolute;left:723px;top:303px;white-space:pre;font:bold 13px/16px 'Liberation Sans', sans-serif;color:#000">Setout</div>
<div style="position:absolute;left:619px;top:330px;width:186px;height:20px;border:1px solid;border-color:#808080 transparent transparent #808080;"><div style="position:absolute;left:0;top:0;width:184px;height:18px;border:1px solid;border-color:#404040 #D4D0C8 #D4D0C8 #404040;background:#E1E1E1"></div></div>
<div style="position:absolute;left:789px;top:332px;width:15px;height:17px;border-right:1px solid #404040;border-bottom:1px solid #404040;"><div style="position:absolute;left:0;top:0;width:13px;height:15px;border:1px solid;border-color:#FFFFFF #808080 #808080 #FFFFFF;background:#D4D0C8"></div></div>
<div style="position:absolute;left:793px;top:339px;width:0;height:0;border-left:4px solid transparent;border-right:4px solid transparent;border-top:4px solid #000"></div>
<div style="position:absolute;left:619px;top:355px;white-space:pre;font:bold 13px/16px 'Liberation Sans', sans-serif;color:#000">Drop Yard:</div>
<div style="position:absolute;left:837px;top:346px;width:100px;height:34px;border-right:1px solid #404040;border-bottom:1px solid #404040;"><div style="position:absolute;left:0;top:0;width:98px;height:32px;border:1px solid;border-color:#FFFFFF #808080 #808080 #FFFFFF;background:#D4D0C8"></div></div>
<div style="position:absolute;left:837px;top:356px;width:100px;text-align:center;white-space:pre;font:bold 13.5px/16px 'Liberation Sans', sans-serif;color:#808080;text-shadow:1px 1px 0 #fff">Apply</div>
<div style="position:absolute;left:490px;top:385px;width:540px;height:1px;background:#808080"></div>
<div style="position:absolute;left:490px;top:386px;width:540px;height:1px;background:#fff"></div>
<div style="position:absolute;left:490px;top:401px;width:88px;height:33px;border-right:1px solid #404040;border-bottom:1px solid #404040;"><div style="position:absolute;left:0;top:0;width:86px;height:31px;border:1px solid;border-color:#FFFFFF #808080 #808080 #FFFFFF;background:#D4D0C8"></div></div>
<div style="position:absolute;left:506px;top:402px;white-space:pre;font:bold 11.5px/15px 'Liberation Sans', sans-serif;color:#808080;text-shadow:1px 1px 0 #fff">Add/Save
Train</div>
<div style="position:absolute;left:620px;top:401px;width:88px;height:32px;border-right:1px solid #404040;border-bottom:1px solid #404040;"><div style="position:absolute;left:0;top:0;width:86px;height:30px;border:1px solid;border-color:#FFFFFF #808080 #808080 #FFFFFF;background:#D4D0C8"></div></div>
<div style="position:absolute;left:620px;top:409px;width:88px;text-align:center;white-space:pre;font:bold 13px/16px 'Liberation Sans', sans-serif;color:#000">Clear</div>
<div style="position:absolute;left:749px;top:401px;width:87px;height:32px;border-right:1px solid #404040;border-bottom:1px solid #404040;"><div style="position:absolute;left:0;top:0;width:85px;height:30px;border:1px solid;border-color:#FFFFFF #808080 #808080 #FFFFFF;background:#D4D0C8"></div></div>
<div style="position:absolute;left:749px;top:409px;width:87px;text-align:center;white-space:pre;font:bold 13px/16px 'Liberation Sans', sans-serif;color:#808080;text-shadow:1px 1px 0 #fff">Delete</div>
<div style="position:absolute;left:18px;top:468px;width:954px;height:273px;border:1px solid;border-color:#808080 #FFFFFF #FFFFFF #808080;box-sizing:border-box"></div>
<div style="position:absolute;left:19px;top:469px;width:952px;height:271px;border:1px solid;border-color:#404040 #808080 #808080 #404040;box-sizing:border-box"></div>
<div style="position:absolute;left:22px;top:472px;width:947px;height:21px;background:#860000"></div>
<div style="position:absolute;left:22px;top:472px;width:947px;text-align:center;white-space:pre;font:bold 16px/19px 'Liberation Sans', sans-serif;color:#F2A250"><span style="font-weight:normal;font-size:13px;vertical-align:2px">*</span> Trains <span style="font-weight:normal;font-size:13px;vertical-align:2px">*</span></div>
<div style="position:absolute;left:22px;top:494px;width:945px;height:243px;border:1px solid;border-color:#808080 #FFFFFF #FFFFFF #808080;box-sizing:border-box"></div>
<div style="position:absolute;left:23px;top:495px;width:943px;height:241px;border:1px solid;border-color:#404040 #808080 #808080 #404040;box-sizing:border-box;background:#B8E6FA"></div>
<div style="position:absolute;left:24px;top:496px;width:72px;height:18px;box-sizing:border-box;background:#D4D0C8;border:1px solid;border-color:#FFFFFF #404040 #404040 #FFFFFF;"></div>
<div style="position:absolute;left:25px;top:497px;width:70px;text-align:center;white-space:pre;font:13px/16px 'Liberation Sans', sans-serif;color:#000">Train ID</div>
<div style="position:absolute;left:96px;top:496px;width:191px;height:18px;box-sizing:border-box;background:#D4D0C8;border:1px solid;border-color:#FFFFFF #404040 #404040 #FFFFFF;"></div>
<div style="position:absolute;left:97px;top:497px;width:189px;text-align:center;white-space:pre;font:13px/16px 'Liberation Sans', sans-serif;color:#000">Train Name</div>
<div style="position:absolute;left:287px;top:496px;width:66px;height:18px;box-sizing:border-box;background:#D4D0C8;border:1px solid;border-color:#FFFFFF #404040 #404040 #FFFFFF;"></div>
<div style="position:absolute;left:288px;top:497px;width:64px;text-align:center;white-space:pre;font:13px/16px 'Liberation Sans', sans-serif;color:#000">Route ID</div>
<div style="position:absolute;left:353px;top:496px;width:66px;height:18px;box-sizing:border-box;background:#D4D0C8;border:1px solid;border-color:#FFFFFF #404040 #404040 #FFFFFF;"></div>
<div style="position:absolute;left:354px;top:497px;width:64px;text-align:center;white-space:pre;font:13px/16px 'Liberation Sans', sans-serif;color:#000">Direction</div>
<div style="position:absolute;left:419px;top:496px;width:66px;height:18px;box-sizing:border-box;background:#D4D0C8;border:1px solid;border-color:#FFFFFF #404040 #404040 #FFFFFF;"></div>
<div style="position:absolute;left:420px;top:497px;width:64px;text-align:center;white-space:pre;font:13px/16px 'Liberation Sans', sans-serif;color:#000">Class</div>
<div style="position:absolute;left:485px;top:496px;width:66px;height:18px;box-sizing:border-box;background:#D4D0C8;border:1px solid;border-color:#FFFFFF #404040 #404040 #FFFFFF;"></div>
<div style="position:absolute;left:486px;top:497px;width:64px;text-align:center;white-space:pre;font:13px/16px 'Liberation Sans', sans-serif;color:#000">Type</div>
<div style="position:absolute;left:551px;top:496px;width:66px;height:18px;box-sizing:border-box;background:#D4D0C8;border:1px solid;border-color:#FFFFFF #404040 #404040 #FFFFFF;"></div>
<div style="position:absolute;left:552px;top:497px;width:64px;text-align:center;white-space:pre;font:13px/16px 'Liberation Sans', sans-serif;color:#000">Cab</div>
<div style="position:absolute;left:617px;top:496px;width:66px;height:18px;box-sizing:border-box;background:#D4D0C8;border:1px solid;border-color:#FFFFFF #404040 #404040 #FFFFFF;"></div>
<div style="position:absolute;left:618px;top:497px;width:64px;text-align:center;white-space:pre;font:13px/16px 'Liberation Sans', sans-serif;color:#000">Reverse</div>
<div style="position:absolute;left:683px;top:496px;width:66px;height:18px;box-sizing:border-box;background:#D4D0C8;border:1px solid;border-color:#FFFFFF #404040 #404040 #FFFFFF;"></div>
<div style="position:absolute;left:684px;top:497px;width:64px;text-align:center;white-space:pre;font:13px/16px 'Liberation Sans', sans-serif;color:#000">Up/Back</div>
<div style="position:absolute;left:749px;top:496px;width:66px;height:18px;box-sizing:border-box;background:#D4D0C8;border:1px solid;border-color:#FFFFFF #404040 #404040 #FFFFFF;"></div>
<div style="position:absolute;left:750px;top:497px;width:64px;text-align:center;white-space:pre;font:13px/16px 'Liberation Sans', sans-serif;color:#000">Loop</div>
<div style="position:absolute;left:815px;top:496px;width:76px;height:18px;box-sizing:border-box;background:#D4D0C8;border:1px solid;border-color:#FFFFFF #404040 #404040 #FFFFFF;"></div>
<div style="position:absolute;left:816px;top:497px;width:74px;text-align:center;white-space:pre;font:13px/16px 'Liberation Sans', sans-serif;color:#000">Last Run</div>
<div style="position:absolute;left:891px;top:496px;width:56px;height:18px;box-sizing:border-box;background:#D4D0C8;border:1px solid;border-color:#FFFFFF #404040 #404040 #FFFFFF;"></div>
<div style="position:absolute;left:892px;top:497px;width:54px;text-align:center;white-space:pre;font:13px/16px 'Liberation Sans', sans-serif;color:#000">Status</div>
<div style="position:absolute;left:25px;top:514px;width:923px;height:19px;background:#000"></div>
<div style="position:absolute;left:25px;top:514px;width:923px;height:19px;background:#0A246A;background-clip:padding-box;box-sizing:border-box;border:1px dotted #fff"></div>
<div style="position:absolute;left:96px;top:515px;width:1px;height:17px;background:#A6CAF0"></div>
<div style="position:absolute;left:28px;top:516px;white-space:pre;font:13px/16px 'Liberation Sans', sans-serif;color:#fff">931</div>
<div style="position:absolute;left:287px;top:515px;width:1px;height:17px;background:#A6CAF0"></div>
<div style="position:absolute;left:99px;top:516px;white-space:pre;font:13px/16px 'Liberation Sans', sans-serif;color:#fff">Daily goods</div>
<div style="position:absolute;left:353px;top:515px;width:1px;height:17px;background:#A6CAF0"></div>
<div style="position:absolute;left:288px;top:516px;width:65px;text-align:center;white-space:pre;font:13px/16px 'Liberation Sans', sans-serif;color:#fff">TSB</div>
<div style="position:absolute;left:419px;top:515px;width:1px;height:17px;background:#A6CAF0"></div>
<div style="position:absolute;left:354px;top:516px;width:65px;text-align:center;white-space:pre;font:13px/16px 'Liberation Sans', sans-serif;color:#fff">East</div>
<div style="position:absolute;left:485px;top:515px;width:1px;height:17px;background:#A6CAF0"></div>
<div style="position:absolute;left:420px;top:516px;width:65px;text-align:center;white-space:pre;font:13px/16px 'Liberation Sans', sans-serif;color:#fff">Extra</div>
<div style="position:absolute;left:551px;top:515px;width:1px;height:17px;background:#A6CAF0"></div>
<div style="position:absolute;left:486px;top:516px;width:65px;text-align:center;white-space:pre;font:13px/16px 'Liberation Sans', sans-serif;color:#fff">Frt</div>
<div style="position:absolute;left:617px;top:515px;width:1px;height:17px;background:#A6CAF0"></div>
<div style="position:absolute;left:552px;top:516px;width:65px;text-align:center;white-space:pre;font:13px/16px 'Liberation Sans', sans-serif;color:#fff">Yes</div>
<div style="position:absolute;left:683px;top:515px;width:1px;height:17px;background:#A6CAF0"></div>
<div style="position:absolute;left:749px;top:515px;width:1px;height:17px;background:#A6CAF0"></div>
<div style="position:absolute;left:684px;top:516px;width:65px;text-align:center;white-space:pre;font:13px/16px 'Liberation Sans', sans-serif;color:#fff">Yes</div>
<div style="position:absolute;left:815px;top:515px;width:1px;height:17px;background:#A6CAF0"></div>
<div style="position:absolute;left:891px;top:515px;width:1px;height:17px;background:#A6CAF0"></div>
<div style="position:absolute;left:816px;top:516px;width:75px;text-align:center;white-space:pre;font:13px/16px 'Liberation Sans', sans-serif;color:#fff">09/02/1955</div>
<div style="position:absolute;left:947px;top:515px;width:1px;height:17px;background:#A6CAF0"></div>
<div style="position:absolute;left:892px;top:516px;width:55px;text-align:center;white-space:pre;font:13px/16px 'Liberation Sans', sans-serif;color:#fff">Running</div>
<div style="position:absolute;left:25px;top:551px;width:923px;height:1px;background:#A4CEE2"></div>
<div style="position:absolute;left:96px;top:533px;width:1px;height:19px;background:#A4CEE2"></div>
<div style="position:absolute;left:28px;top:535px;white-space:pre;font:13px/16px 'Liberation Sans', sans-serif;color:#000">11</div>
<div style="position:absolute;left:287px;top:533px;width:1px;height:19px;background:#A4CEE2"></div>
<div style="position:absolute;left:99px;top:535px;white-space:pre;font:13px/16px 'Liberation Sans', sans-serif;color:#000">Pass</div>
<div style="position:absolute;left:353px;top:533px;width:1px;height:19px;background:#A4CEE2"></div>
<div style="position:absolute;left:288px;top:535px;width:65px;text-align:center;white-space:pre;font:13px/16px 'Liberation Sans', sans-serif;color:#000">TSB</div>
<div style="position:absolute;left:419px;top:533px;width:1px;height:19px;background:#A4CEE2"></div>
<div style="position:absolute;left:354px;top:535px;width:65px;text-align:center;white-space:pre;font:13px/16px 'Liberation Sans', sans-serif;color:#000">East</div>
<div style="position:absolute;left:485px;top:533px;width:1px;height:19px;background:#A4CEE2"></div>
<div style="position:absolute;left:420px;top:535px;width:65px;text-align:center;white-space:pre;font:13px/16px 'Liberation Sans', sans-serif;color:#000">Extra</div>
<div style="position:absolute;left:551px;top:533px;width:1px;height:19px;background:#A4CEE2"></div>
<div style="position:absolute;left:486px;top:535px;width:65px;text-align:center;white-space:pre;font:13px/16px 'Liberation Sans', sans-serif;color:#000">Pass</div>
<div style="position:absolute;left:617px;top:533px;width:1px;height:19px;background:#A4CEE2"></div>
<div style="position:absolute;left:552px;top:535px;width:65px;text-align:center;white-space:pre;font:13px/16px 'Liberation Sans', sans-serif;color:#000">No</div>
<div style="position:absolute;left:683px;top:533px;width:1px;height:19px;background:#A4CEE2"></div>
<div style="position:absolute;left:749px;top:533px;width:1px;height:19px;background:#A4CEE2"></div>
<div style="position:absolute;left:684px;top:535px;width:65px;text-align:center;white-space:pre;font:13px/16px 'Liberation Sans', sans-serif;color:#000">Yes</div>
<div style="position:absolute;left:815px;top:533px;width:1px;height:19px;background:#A4CEE2"></div>
<div style="position:absolute;left:891px;top:533px;width:1px;height:19px;background:#A4CEE2"></div>
<div style="position:absolute;left:816px;top:535px;width:75px;text-align:center;white-space:pre;font:13px/16px 'Liberation Sans', sans-serif;color:#000">08/27/1955</div>
<div style="position:absolute;left:947px;top:533px;width:1px;height:19px;background:#A4CEE2"></div>
<div style="position:absolute;left:892px;top:535px;width:55px;text-align:center;white-space:pre;font:13px/16px 'Liberation Sans', sans-serif;color:#000">OK</div>
<div style="position:absolute;left:25px;top:570px;width:923px;height:1px;background:#A4CEE2"></div>
<div style="position:absolute;left:96px;top:552px;width:1px;height:19px;background:#A4CEE2"></div>
<div style="position:absolute;left:28px;top:554px;white-space:pre;font:13px/16px 'Liberation Sans', sans-serif;color:#000">932</div>
<div style="position:absolute;left:287px;top:552px;width:1px;height:19px;background:#A4CEE2"></div>
<div style="position:absolute;left:99px;top:554px;white-space:pre;font:13px/16px 'Liberation Sans', sans-serif;color:#000">daily xtre</div>
<div style="position:absolute;left:353px;top:552px;width:1px;height:19px;background:#A4CEE2"></div>
<div style="position:absolute;left:288px;top:554px;width:65px;text-align:center;white-space:pre;font:13px/16px 'Liberation Sans', sans-serif;color:#000">TSB</div>
<div style="position:absolute;left:419px;top:552px;width:1px;height:19px;background:#A4CEE2"></div>
<div style="position:absolute;left:354px;top:554px;width:65px;text-align:center;white-space:pre;font:13px/16px 'Liberation Sans', sans-serif;color:#000">West</div>
<div style="position:absolute;left:485px;top:552px;width:1px;height:19px;background:#A4CEE2"></div>
<div style="position:absolute;left:420px;top:554px;width:65px;text-align:center;white-space:pre;font:13px/16px 'Liberation Sans', sans-serif;color:#000">Extra</div>
<div style="position:absolute;left:551px;top:552px;width:1px;height:19px;background:#A4CEE2"></div>
<div style="position:absolute;left:486px;top:554px;width:65px;text-align:center;white-space:pre;font:13px/16px 'Liberation Sans', sans-serif;color:#000">Frt</div>
<div style="position:absolute;left:617px;top:552px;width:1px;height:19px;background:#A4CEE2"></div>
<div style="position:absolute;left:552px;top:554px;width:65px;text-align:center;white-space:pre;font:13px/16px 'Liberation Sans', sans-serif;color:#000">Yes</div>
<div style="position:absolute;left:683px;top:552px;width:1px;height:19px;background:#A4CEE2"></div>
<div style="position:absolute;left:618px;top:554px;width:65px;text-align:center;white-space:pre;font:13px/16px 'Liberation Sans', sans-serif;color:#000">Yes</div>
<div style="position:absolute;left:749px;top:552px;width:1px;height:19px;background:#A4CEE2"></div>
<div style="position:absolute;left:684px;top:554px;width:65px;text-align:center;white-space:pre;font:13px/16px 'Liberation Sans', sans-serif;color:#000">Yes</div>
<div style="position:absolute;left:815px;top:552px;width:1px;height:19px;background:#A4CEE2"></div>
<div style="position:absolute;left:891px;top:552px;width:1px;height:19px;background:#A4CEE2"></div>
<div style="position:absolute;left:816px;top:554px;width:75px;text-align:center;white-space:pre;font:13px/16px 'Liberation Sans', sans-serif;color:#000">08/27/1955</div>
<div style="position:absolute;left:947px;top:552px;width:1px;height:19px;background:#A4CEE2"></div>
<div style="position:absolute;left:892px;top:554px;width:55px;text-align:center;white-space:pre;font:13px/16px 'Liberation Sans', sans-serif;color:#000">OK</div>
<div style="position:absolute;left:25px;top:589px;width:923px;height:1px;background:#A4CEE2"></div>
<div style="position:absolute;left:96px;top:571px;width:1px;height:19px;background:#A4CEE2"></div>
<div style="position:absolute;left:28px;top:573px;white-space:pre;font:13px/16px 'Liberation Sans', sans-serif;color:#000">950</div>
<div style="position:absolute;left:287px;top:571px;width:1px;height:19px;background:#A4CEE2"></div>
<div style="position:absolute;left:99px;top:573px;white-space:pre;font:13px/16px 'Liberation Sans', sans-serif;color:#000">freight</div>
<div style="position:absolute;left:353px;top:571px;width:1px;height:19px;background:#A4CEE2"></div>
<div style="position:absolute;left:288px;top:573px;width:65px;text-align:center;white-space:pre;font:13px/16px 'Liberation Sans', sans-serif;color:#000">TSB</div>
<div style="position:absolute;left:419px;top:571px;width:1px;height:19px;background:#A4CEE2"></div>
<div style="position:absolute;left:354px;top:573px;width:65px;text-align:center;white-space:pre;font:13px/16px 'Liberation Sans', sans-serif;color:#000">East</div>
<div style="position:absolute;left:485px;top:571px;width:1px;height:19px;background:#A4CEE2"></div>
<div style="position:absolute;left:420px;top:573px;width:65px;text-align:center;white-space:pre;font:13px/16px 'Liberation Sans', sans-serif;color:#000">Extra</div>
<div style="position:absolute;left:551px;top:571px;width:1px;height:19px;background:#A4CEE2"></div>
<div style="position:absolute;left:486px;top:573px;width:65px;text-align:center;white-space:pre;font:13px/16px 'Liberation Sans', sans-serif;color:#000">Frt</div>
<div style="position:absolute;left:617px;top:571px;width:1px;height:19px;background:#A4CEE2"></div>
<div style="position:absolute;left:552px;top:573px;width:65px;text-align:center;white-space:pre;font:13px/16px 'Liberation Sans', sans-serif;color:#000">Yes</div>
<div style="position:absolute;left:683px;top:571px;width:1px;height:19px;background:#A4CEE2"></div>
<div style="position:absolute;left:749px;top:571px;width:1px;height:19px;background:#A4CEE2"></div>
<div style="position:absolute;left:815px;top:571px;width:1px;height:19px;background:#A4CEE2"></div>
<div style="position:absolute;left:891px;top:571px;width:1px;height:19px;background:#A4CEE2"></div>
<div style="position:absolute;left:816px;top:573px;width:75px;text-align:center;white-space:pre;font:13px/16px 'Liberation Sans', sans-serif;color:#000">07/07/1955</div>
<div style="position:absolute;left:947px;top:571px;width:1px;height:19px;background:#A4CEE2"></div>
<div style="position:absolute;left:892px;top:573px;width:55px;text-align:center;white-space:pre;font:13px/16px 'Liberation Sans', sans-serif;color:#000">OK</div>
<div style="position:absolute;left:25px;top:608px;width:923px;height:1px;background:#A4CEE2"></div>
<div style="position:absolute;left:96px;top:590px;width:1px;height:19px;background:#A4CEE2"></div>
<div style="position:absolute;left:28px;top:592px;white-space:pre;font:13px/16px 'Liberation Sans', sans-serif;color:#000">951</div>
<div style="position:absolute;left:287px;top:590px;width:1px;height:19px;background:#A4CEE2"></div>
<div style="position:absolute;left:99px;top:592px;white-space:pre;font:13px/16px 'Liberation Sans', sans-serif;color:#000">freight</div>
<div style="position:absolute;left:353px;top:590px;width:1px;height:19px;background:#A4CEE2"></div>
<div style="position:absolute;left:288px;top:592px;width:65px;text-align:center;white-space:pre;font:13px/16px 'Liberation Sans', sans-serif;color:#000">TSB</div>
<div style="position:absolute;left:419px;top:590px;width:1px;height:19px;background:#A4CEE2"></div>
<div style="position:absolute;left:354px;top:592px;width:65px;text-align:center;white-space:pre;font:13px/16px 'Liberation Sans', sans-serif;color:#000">West</div>
<div style="position:absolute;left:485px;top:590px;width:1px;height:19px;background:#A4CEE2"></div>
<div style="position:absolute;left:420px;top:592px;width:65px;text-align:center;white-space:pre;font:13px/16px 'Liberation Sans', sans-serif;color:#000">Extra</div>
<div style="position:absolute;left:551px;top:590px;width:1px;height:19px;background:#A4CEE2"></div>
<div style="position:absolute;left:486px;top:592px;width:65px;text-align:center;white-space:pre;font:13px/16px 'Liberation Sans', sans-serif;color:#000">Frt</div>
<div style="position:absolute;left:617px;top:590px;width:1px;height:19px;background:#A4CEE2"></div>
<div style="position:absolute;left:552px;top:592px;width:65px;text-align:center;white-space:pre;font:13px/16px 'Liberation Sans', sans-serif;color:#000">Yes</div>
<div style="position:absolute;left:683px;top:590px;width:1px;height:19px;background:#A4CEE2"></div>
<div style="position:absolute;left:618px;top:592px;width:65px;text-align:center;white-space:pre;font:13px/16px 'Liberation Sans', sans-serif;color:#000">Yes</div>
<div style="position:absolute;left:749px;top:590px;width:1px;height:19px;background:#A4CEE2"></div>
<div style="position:absolute;left:815px;top:590px;width:1px;height:19px;background:#A4CEE2"></div>
<div style="position:absolute;left:891px;top:590px;width:1px;height:19px;background:#A4CEE2"></div>
<div style="position:absolute;left:816px;top:592px;width:75px;text-align:center;white-space:pre;font:13px/16px 'Liberation Sans', sans-serif;color:#000">07/06/1955</div>
<div style="position:absolute;left:947px;top:590px;width:1px;height:19px;background:#A4CEE2"></div>
<div style="position:absolute;left:892px;top:592px;width:55px;text-align:center;white-space:pre;font:13px/16px 'Liberation Sans', sans-serif;color:#000">OK</div>
<div style="position:absolute;left:25px;top:627px;width:923px;height:1px;background:#A4CEE2"></div>
<div style="position:absolute;left:96px;top:609px;width:1px;height:19px;background:#A4CEE2"></div>
<div style="position:absolute;left:28px;top:611px;white-space:pre;font:13px/16px 'Liberation Sans', sans-serif;color:#000">524</div>
<div style="position:absolute;left:287px;top:609px;width:1px;height:19px;background:#A4CEE2"></div>
<div style="position:absolute;left:99px;top:611px;white-space:pre;font:13px/16px 'Liberation Sans', sans-serif;color:#000">mixed</div>
<div style="position:absolute;left:353px;top:609px;width:1px;height:19px;background:#A4CEE2"></div>
<div style="position:absolute;left:288px;top:611px;width:65px;text-align:center;white-space:pre;font:13px/16px 'Liberation Sans', sans-serif;color:#000">TSB</div>
<div style="position:absolute;left:419px;top:609px;width:1px;height:19px;background:#A4CEE2"></div>
<div style="position:absolute;left:354px;top:611px;width:65px;text-align:center;white-space:pre;font:13px/16px 'Liberation Sans', sans-serif;color:#000">East</div>
<div style="position:absolute;left:485px;top:609px;width:1px;height:19px;background:#A4CEE2"></div>
<div style="position:absolute;left:420px;top:611px;width:65px;text-align:center;white-space:pre;font:13px/16px 'Liberation Sans', sans-serif;color:#000">Extra</div>
<div style="position:absolute;left:551px;top:609px;width:1px;height:19px;background:#A4CEE2"></div>
<div style="position:absolute;left:486px;top:611px;width:65px;text-align:center;white-space:pre;font:13px/16px 'Liberation Sans', sans-serif;color:#000">Mixed</div>
<div style="position:absolute;left:617px;top:609px;width:1px;height:19px;background:#A4CEE2"></div>
<div style="position:absolute;left:552px;top:611px;width:65px;text-align:center;white-space:pre;font:13px/16px 'Liberation Sans', sans-serif;color:#000">No</div>
<div style="position:absolute;left:683px;top:609px;width:1px;height:19px;background:#A4CEE2"></div>
<div style="position:absolute;left:749px;top:609px;width:1px;height:19px;background:#A4CEE2"></div>
<div style="position:absolute;left:684px;top:611px;width:65px;text-align:center;white-space:pre;font:13px/16px 'Liberation Sans', sans-serif;color:#000">Yes</div>
<div style="position:absolute;left:815px;top:609px;width:1px;height:19px;background:#A4CEE2"></div>
<div style="position:absolute;left:891px;top:609px;width:1px;height:19px;background:#A4CEE2"></div>
<div style="position:absolute;left:816px;top:611px;width:75px;text-align:center;white-space:pre;font:13px/16px 'Liberation Sans', sans-serif;color:#000">08/27/1955</div>
<div style="position:absolute;left:947px;top:609px;width:1px;height:19px;background:#A4CEE2"></div>
<div style="position:absolute;left:892px;top:611px;width:55px;text-align:center;white-space:pre;font:13px/16px 'Liberation Sans', sans-serif;color:#000">OK</div>
</body></html>
